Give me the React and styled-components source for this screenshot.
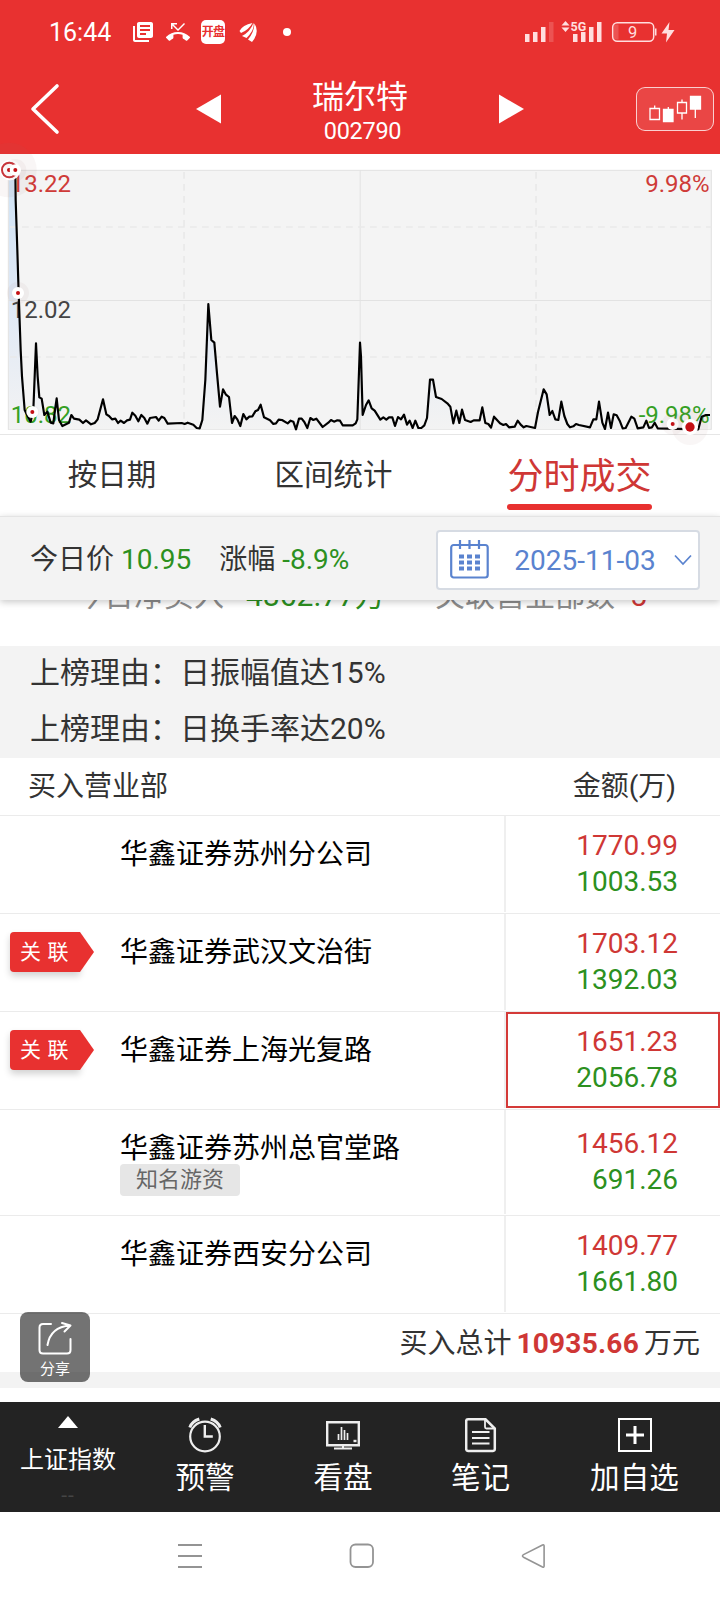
import React from "react";
import styled, { createGlobalStyle } from "styled-components";
import { MdLibraryBooks, MdPhoneMissed } from "react-icons/md";

const RED = "#e83130";
const UP = "#cf3735";
const DOWN = "#2c9020";

const Global = createGlobalStyle`
  * { box-sizing: border-box; }
  body { margin: 0; background: #fff; }
`;

const Screen = styled.div`
  position: relative;
  width: 720px;
  height: 1600px;
  overflow: hidden;
  display: flex;
  flex-direction: column;
  background: #fff;
  color: #333;
  font-family: Roboto, "Noto Sans CJK SC", sans-serif;
  font-weight: 400;
  white-space: nowrap;
`;

/* ---------- status bar ---------- */
const StatusBar = styled.div`
  height: 64px;
  flex: none;
  display: flex;
  align-items: center;
  background: ${RED};
  color: #fff;
  padding: 0 44px 0 49px;
  svg { display: block; flex: none; }
`;
const Clock = styled.span`
  font-size: 25px;
  line-height: 30px;
  width: 82px;
  padding-top: 1px;
`;
const StatusIcons = styled.div`
  display: flex;
  align-items: center;
  gap: 11px;
`;
const AppBadge = styled.span`
  width: 24px;
  height: 24px;
  border-radius: 5px;
  background: #fff;
  color: ${RED};
  display: flex;
  justify-content: center;
  font-size: 12px;
  letter-spacing: -0.8px;
  font-weight: 700;
  line-height: 24px;
`;
const StatusDot = styled.span`
  width: 8px;
  height: 8px;
  border-radius: 50%;
  background: #fff;
  margin-left: 12px;
`;
const StatusRight = styled.div`
  margin-left: auto;
  display: flex;
  align-items: center;
`;

/* ---------- title bar ---------- */
const TitleBar = styled.header`
  height: 90px;
  flex: none;
  display: grid;
  grid-template-columns: 1fr 328px 1fr;
  align-items: center;
  background: ${RED};
  color: #fff;
  svg { display: block; }
`;
const BackCell = styled.div`
  padding-left: 30px;
`;
const Switcher = styled.div`
  display: flex;
  align-items: center;
  justify-content: space-between;
`;
const StockTitle = styled.div`
  display: flex;
  flex-direction: column;
  align-items: center;
  padding-top: 8px;
`;
const StockName = styled.div`
  font-size: 32px;
  line-height: 35px;
`;
const StockCode = styled.div`
  font-size: 23.5px;
  letter-spacing: -0.3px;
  line-height: 29px;
  margin-top: 2px;
  padding-left: 5px;
`;
const KlineButton = styled.div`
  justify-self: end;
  width: 78px;
  height: 44px;
  margin-right: 6px;
  border: 1px solid rgba(255, 255, 255, 0.75);
  border-radius: 9px;
  background: rgba(255, 255, 255, 0.1);
  display: flex;
  align-items: center;
  justify-content: center;
`;

/* ---------- chart ---------- */
const ChartPanel = styled.div`
  height: 281px;
  flex: none;
  border-bottom: 1px solid #e6e6e6;
  svg { display: block; overflow: visible; }
`;

/* ---------- tabs ---------- */
const Tabs = styled.nav`
  height: 81px;
  flex: none;
  display: grid;
  grid-template-columns: 224px 219px 273px;
  justify-items: center;
`;
const Tab = styled.div`
  height: 75px;
  line-height: ${(p) => (p.$active ? 84 : 81)}px;
  font-size: ${(p) => (p.$active ? 36 : 29.5)}px;
  color: ${(p) => (p.$active ? UP : "#333")};
  position: relative;
  &::after {
    content: "";
    display: ${(p) => (p.$active ? "block" : "none")};
    position: absolute;
    left: 0;
    right: 0;
    bottom: 0;
    height: 6px;
    border-radius: 3px;
    background: ${RED};
  }
`;

/* ---------- price / date bar ---------- */
const PriceBar = styled.div`
  height: 84px;
  flex: none;
  position: relative;
  z-index: 1;
  display: flex;
  align-items: center;
  padding: 2px 20px 0 30px;
  background: #f3f3f3;
  border-top: 1px solid #e4e4e4;
  box-shadow: 0 2px 7px rgba(0, 0, 0, 0.22);
  font-size: 28px;
  line-height: 40px;
`;
const Quote = styled.span`
  margin-right: 28px;
  color: #333;
`;
const Value = styled.span`
  color: ${(p) => (p.$up ? UP : DOWN)};
`;
const DatePicker = styled.div`
  margin-left: auto;
  width: 264px;
  height: 60px;
  border: 2px solid #d6dbe3;
  border-radius: 4px;
  background: #fff;
  color: #5a83cf;
  display: flex;
  align-items: center;
  justify-content: space-between;
  padding: 0 6px 0 12px;
  svg { display: block; }
`;
const DateText = styled.span`
  padding: 2px 0 0 7px;
`;

/* ---------- scrolled summary ---------- */
const Summary = styled.div`
  height: 46px;
  flex: none;
  display: flex;
  padding-left: 74px;
  font-size: 30px;
  line-height: 40px;
  color: #8c8c8c;
`;
const SummaryItem = styled.div`
  flex: none;
  width: ${(p) => p.$width}px;
  display: flex;
  gap: ${(p) => p.$gap}px;
  margin-top: -24px;
`;

/* ---------- reasons ---------- */
const Reasons = styled.div`
  flex: none;
  background: #f3f3f3;
`;
const Reason = styled.div`
  height: 56px;
  padding-left: 30px;
  font-size: 30px;
  line-height: 54px;
`;

/* ---------- table ---------- */
const TableHead = styled.div`
  height: 58px;
  flex: none;
  display: flex;
  justify-content: space-between;
  padding: 0 44px 0 28px;
  border-bottom: 1px solid #ebebeb;
  font-size: 28px;
  line-height: 57px;
`;
const Row = styled.div`
  height: ${(p) => (p.$tagged ? 106 : 98)}px;
  flex: none;
  display: grid;
  grid-template-columns: 120px 386px 214px;
  border-bottom: 1px solid #ebebeb;
  padding-bottom: 1px;
`;
const Relation = styled.div`
  padding: 18px 0 0 10px;
`;
const RelationFlag = styled.div`
  position: relative;
  width: 70px;
  height: 40px;
  border-radius: 4px 0 0 4px;
  background: ${RED};
  color: #fff;
  font-size: 21px;
  line-height: 40px;
  letter-spacing: 6.5px;
  padding-left: 10px;
  box-shadow: 0 4px 7px rgba(0, 0, 0, 0.18);
  &::after {
    content: "";
    position: absolute;
    left: 70px;
    top: 0;
    border: solid transparent;
    border-width: 20px 0 20px 14px;
    border-left-color: ${RED};
  }
`;
const Branch = styled.div`
  padding-top: 22px;
  border-right: 2px solid #efefef;
  color: #000;
  font-size: 28px;
`;
const BranchName = styled.div`
  height: 32px;
  line-height: 34px;
`;
const BranchTag = styled.div`
  width: 120px;
  height: 32px;
  border-radius: 4px;
  background: #e6e6e6;
  color: #666;
  font-size: 22px;
  line-height: 32px;
  text-align: center;
`;
const Amounts = styled.div`
  display: flex;
  flex-direction: column;
  justify-content: center;
  align-items: flex-end;
  padding-right: ${(p) => (p.$selected ? 40 : 42)}px;
  border: ${(p) => (p.$selected ? "2px solid #d43a38" : "none")};
  font-size: 28px;
  line-height: 36px;
`;
const Total = styled.div`
  height: 58px;
  flex: none;
  display: flex;
  justify-content: flex-end;
  gap: 5px;
  padding-right: 20px;
  font-size: 28px;
  line-height: 60px;
`;
const TotalValue = styled.b`
  color: ${UP};
  font-weight: 700;
  letter-spacing: 0.25px;
`;
const Separator = styled.div`
  height: 16px;
  flex: none;
  margin-bottom: 14px;
  background: #f3f3f3;
`;

/* ---------- floating share ---------- */
const Share = styled.div`
  position: absolute;
  left: 20px;
  top: 1312px;
  width: 70px;
  height: 70px;
  border-radius: 8px;
  background: rgba(0, 0, 0, 0.55);
  color: #fff;
  display: flex;
  flex-direction: column;
  align-items: center;
  padding-top: 9px;
  font-size: 15px;
  line-height: 20px;
  svg { display: block; margin-bottom: 4px; }
`;

/* ---------- bottom bars ---------- */
const ActionBar = styled.div`
  height: 110px;
  flex: none;
  display: grid;
  grid-template-columns: 136px 138px 138px 137px 171px;
  background: #232323;
  color: #fff;
`;
const Action = styled.div`
  display: flex;
  flex-direction: column;
  align-items: center;
  padding-top: 15px;
  font-size: 29.6px;
  line-height: 36px;
  svg { display: block; margin-bottom: 7px; }
`;
const IndexAction = styled(Action)`
  padding-top: 14px;
  font-size: 24px;
  line-height: 30px;
  svg { margin-bottom: 17px; }
`;
const IndexValue = styled.span`
  color: #454545;
  font-size: 21px;
  letter-spacing: 1px;
  line-height: 30px;
  margin-top: 5px;
`;
const SystemNav = styled.div`
  height: 88px;
  flex: none;
  display: flex;
  align-items: center;
  justify-content: space-between;
  padding: 0 174px 0 177px;
`;

const linePoints = `46,60 47,150 52,300 56,430 62,600 66,680 74,780 84,800 92,815 100,780 108,580 113,680
118,742 125,746 133,795 142,785 152,818 160,820 165,780 170,745 177,810 187,828 207,818 214,795 222,806 238,809
249,819 258,811 273,823 284,819 293,808 309,748 319,793 327,798 336,808 346,806 354,819 362,812 372,819
381,811 390,809 397,788 406,797 415,814 424,795 433,804 442,821 450,804 468,801 476,812 485,800 493,804
503,821 545,819 554,822 563,818 580,824 590,834 599,835 607,810 616,690 625,462 634,570 643,578 651,670
660,770 669,718 678,734 687,741 696,819 704,798 712,808 721,828 730,792 739,808 748,800 757,799 766,784
774,780 782,764 792,802 810,811 820,822 828,820 836,809 846,810 863,820 872,812 880,815 888,838 897,806
905,806 913,816 922,834 931,804 940,810 949,806 968,831 985,818 993,810 1002,815 1012,811 1020,812
1028,826 1058,826 1067,820 1072,808 1080,578 1083,620 1088,795 1098,765 1106,751 1115,775 1124,782
1141,809 1150,802 1159,809 1167,802 1177,802 1185,828 1194,801 1203,808 1212,794 1221,824 1229,812
1238,834 1246,812 1255,834 1264,834 1273,826 1281,804 1290,689 1299,689 1308,741 1325,747 1342,760
1351,770 1360,820 1369,782 1378,819 1386,779 1395,810 1412,816 1421,811 1439,811 1447,772 1456,819
1465,822 1473,833 1482,800 1500,820 1510,825 1518,822 1527,832 1544,830 1553,812 1562,824 1571,832
1579,828 1605,834 1614,786 1631,718 1640,733 1649,795 1657,783 1666,808 1675,810 1684,755 1693,798
1702,822 1710,832 1720,829 1728,822 1737,825 1770,832 1780,808 1789,808 1797,755 1807,818 1815,837
1824,788 1833,834 1841,793 1850,796 1859,812 1868,835 1877,834 1894,800 1903,806 1913,835 1930,832
1939,812 1947,834 1956,832 1964,818 1973,835 2095,838 2105,800 2118,795 2130,795`;

function Marker({ x, y, glow = 33, halo = 18, dot = 6 }) {
  return (
    <g>
      <circle cx={x} cy={y} r={glow} fill="rgba(150,110,110,0.06)" />
      <circle cx={x} cy={y} r={halo} fill="#fff" />
      <circle cx={x} cy={y} r={dot} fill="#c40f14" />
    </g>
  );
}

function Chart() {
  return (
    <svg width="720" height="281" viewBox="0 12 2160 843" fontFamily="Roboto" fontSize="72">
      <defs>
        <linearGradient id="area" x1="0" y1="0" x2="0" y2="1">
          <stop offset="0" stopColor="#cfe3f5" />
          <stop offset="0.5" stopColor="#dfe8f5" />
          <stop offset="1" stopColor="#f3f3f3" />
        </linearGradient>
      </defs>
      <rect x="25" y="61" width="2109" height="777" fill="#f4f4f4" stroke="#e2e2e2" strokeWidth="3" />
      <polygon points={`27,62 ${linePoints} 2130,838 27,838`} fill="url(#area)" />
      <g stroke="#e2e2e2" strokeWidth="3" fill="none">
        <path d="M25 451.500H2134M1080.500 61V838" />
        <path d="M30 231H2134M30 621H2134M552 66V838M1608 66V838" stroke="#e9e9e9" strokeWidth="5" strokeDasharray="20 16" />
      </g>
      <text x="32" y="127" fill="#cf3b38">13.22</text>
      <text x="32" y="504" fill="#444">12.02</text>
      <text x="32" y="819" fill="#35a024">10.82</text>
      <text x="2129" y="126" fill="#cf3b38" textAnchor="end">9.98%</text>
      <text x="2129" y="819" fill="#35a024" textAnchor="end">-9.98%</text>
      <polyline points={linePoints} fill="none" stroke="#000" strokeWidth="6.500" strokeLinejoin="round" />
      <circle cx="28" cy="60" r="82" fill="rgba(150,110,110,0.06)" />
      <circle cx="30" cy="60" r="31" fill="#fff" />
      <circle cx="28" cy="60" r="22" fill="none" stroke="#c8353a" strokeWidth="6" />
      <circle cx="27" cy="60" r="6" fill="#c40f14" />
      <Marker x={46} y={60} glow={33} halo={17} />
      <Marker x={54} y={429} />
      <Marker x={97} y={786} glow={20} />
      <Marker x={2018} y={822} />
      <Marker x={2070} y={831} glow={54} halo={24} dot={14} />
    </svg>
  );
}

function SignalIcons() {
  return (
    <svg width="151" height="24" viewBox="525 20 151 24" fill="#ffdede">
      <path d="M525 34h4.500v8H525zM533 32h4.500v10H533zM541 27h4.500v15H541z" />
      <path d="M549 22h4.500v20H549z" opacity="0.2" />
      <path d="M573 34h4.500v8H573zM581 32h4.500v10H581zM589 27h4.500v15H589zM597 22h4.500v20H597z" />
      <path d="M561.500 25.500l4-4.500 4 4.500zM561.500 27.500l4 4.500 4-4.500z" />
      <text x="570.500" y="31" fontFamily="Roboto" fontSize="12.500" fontWeight="700">5G</text>
      <rect x="612.700" y="22.700" width="41" height="18.600" rx="4.500" fill="none" stroke="#ffdede" strokeWidth="1.500" />
      <path d="M614 24.500h4.500v15H614z" opacity="0.2" />
      <path d="M655 28.500h1.500v7H655z" />
      <text x="628" y="38" fontFamily="Roboto" fontSize="16.500">9</text>
      <path d="M669.500 22l-8 11.500h5.500l-1 9 8.500-12.500h-6z" />
    </svg>
  );
}

const rows = [
  { name: "华鑫证券苏州分公司", buy: "1770.99", sell: "1003.53" },
  { name: "华鑫证券武汉文治街", buy: "1703.12", sell: "1392.03", related: true },
  { name: "华鑫证券上海光复路", buy: "1651.23", sell: "2056.78", related: true, selected: true },
  { name: "华鑫证券苏州总官堂路", buy: "1456.12", sell: "691.26", tag: "知名游资" },
  { name: "华鑫证券西安分公司", buy: "1409.77", sell: "1661.80" },
];

export default function App() {
  return (
    <>
      <Global />
      <Screen>
        <StatusBar>
          <Clock>16:44</Clock>
          <StatusIcons>
            <MdLibraryBooks size={24} />
            <MdPhoneMissed size={24} />
            <AppBadge>开盘</AppBadge>
            <svg width="24" height="24" viewBox="235 20 24 24" fill="#fff">
              <path d="M238.500 31q3-6 13-8-4 7-11.500 10zM241 36q8-4 11.500-13 1.500 7-7 15zM247 39.500q6-7 6.500-16 5.500 9-2.500 18.500z" />
            </svg>
            <StatusDot />
          </StatusIcons>
          <StatusRight>
            <SignalIcons />
          </StatusRight>
        </StatusBar>

        <TitleBar>
          <BackCell>
            <svg width="32" height="52" viewBox="30 83 32 52" fill="none" stroke="#fff" strokeWidth="3.600" strokeLinecap="round" strokeLinejoin="round">
              <path d="M57 86L33 109l24 23" />
            </svg>
          </BackCell>
          <Switcher>
            <svg width="25" height="30" viewBox="0 0 25 30" fill="#fff"><path d="M0 15L25 .5v29z" /></svg>
            <StockTitle>
              <StockName>瑞尔特</StockName>
              <StockCode>002790</StockCode>
            </StockTitle>
            <svg width="25" height="30" viewBox="0 0 25 30" fill="#fff"><path d="M25 15L0 .5v29z" /></svg>
          </Switcher>
          <KlineButton>
            <svg width="54" height="28" viewBox="648 95 54 28" fill="none" stroke="#fff" strokeWidth="1.300">
              <path d="M650 108.500h9.500v11H650zM654.700 105.500v3M677.500 102.500h9v10.500h-9zM682 99.500v3M682 113v6.500M668.300 107v4M695.300 109v9" />
              <path d="M663.500 109.500h9.500v12h-9.500zM690.500 96.500h10v12.500h-10z" fill="#fff" />
            </svg>
          </KlineButton>
        </TitleBar>

        <ChartPanel><Chart /></ChartPanel>

        <Tabs>
          <Tab>按日期</Tab>
          <Tab>区间统计</Tab>
          <Tab $active>分时成交</Tab>
        </Tabs>

        <PriceBar>
          <Quote>今日价 <Value>10.95</Value></Quote>
          <Quote>涨幅 <Value>-8.9%</Value></Quote>
          <DatePicker>
            <svg width="39" height="39" viewBox="0 0 39 39" fill="none" stroke="#5a83cf" strokeWidth="2.200">
              <rect x="1.200" y="5" width="36.500" height="32.500" rx="2.500" />
              <path d="M10 0v9M19.500 0v9M29 0v9" />
              <path d="M9 16.500h21M9 22.500h21M9 28.500h21" strokeWidth="3.800" strokeDasharray="5 3" />
            </svg>
            <DateText>2025-11-03</DateText>
            <svg width="18" height="12" viewBox="0 0 18 12" fill="none" stroke="#5a83cf" strokeWidth="1.700"><path d="M1 1.500l8 8.500 8-8.500" /></svg>
          </DatePicker>
        </PriceBar>

        <Summary>
          <SummaryItem $width={361} $gap={22}>今日净买入 <Value>4862.77万</Value></SummaryItem>
          <SummaryItem $width={220} $gap={15}>关联营业部数 <Value $up>5</Value></SummaryItem>
        </Summary>

        <Reasons>
          <Reason>上榜理由：日振幅值达15%</Reason>
          <Reason>上榜理由：日换手率达20%</Reason>
        </Reasons>

        <TableHead>
          <span>买入营业部</span>
          <span>金额(万)</span>
        </TableHead>
        {rows.map((r) => (
          <Row key={r.name} $tagged={!!r.tag}>
            <Relation>{r.related && <RelationFlag>关联</RelationFlag>}</Relation>
            <Branch>
              <BranchName>{r.name}</BranchName>
              {r.tag && <BranchTag>{r.tag}</BranchTag>}
            </Branch>
            <Amounts $selected={r.selected}>
              <Value $up>{r.buy}</Value>
              <Value>{r.sell}</Value>
            </Amounts>
          </Row>
        ))}
        <Total>
          <span>买入总计</span>
          <TotalValue>10935.66</TotalValue>
          <span>万元</span>
        </Total>
        <Separator />

        <ActionBar>
          <IndexAction>
            <svg width="20" height="12" viewBox="0 0 20 12" fill="#fff"><path d="M10 0l10 12H0z" /></svg>
            上证指数
            <IndexValue>--</IndexValue>
          </IndexAction>
          <Action>
            <svg width="34" height="36" viewBox="188 1417 34 36" fill="none" stroke="#eee" strokeWidth="2.200">
              <circle cx="205" cy="1436.500" r="14.800" />
              <path d="M189.800 1427.500q2-6 9.500-8.500M220.200 1427.500q-2-6-9.500-8.500" strokeWidth="3" />
              <path d="M204.800 1425v11.500h8" strokeWidth="2.400" />
            </svg>
            预警
          </Action>
          <Action>
            <svg width="34" height="36" viewBox="326 1417 34 36" fill="none" stroke="#eee" strokeWidth="2.400">
              <path d="M327.200 1422.200h31.600v23h-31.600z" />
              <path d="M334 1448.500h18M343 1445v3" strokeWidth="2" />
              <path d="M338.500 1440v-6M341.500 1440v-13M344.500 1440v-10M347.500 1440v-7" strokeWidth="1.700" />
              <path d="M353.500 1441h3" />
            </svg>
            看盘
          </Action>
          <Action>
            <svg width="32" height="36" viewBox="465 1417 32 36" fill="none" stroke="#eee" strokeWidth="2.500">
              <path d="M468 1419.300h17.500l9.300 9.300v20.500q0 1.800-1.800 1.800h-25q-1.800 0-1.800-1.800v-28q0-1.800 1.800-1.800z" />
              <path d="M485 1419v8q0 1.500 1.500 1.500h8.500" strokeWidth="1.800" />
              <path d="M472 1432h17.500M472 1438h17.500M472 1443.500h17.500" strokeWidth="1.800" />
            </svg>
            笔记
          </Action>
          <Action>
            <svg width="34" height="36" viewBox="0 0 34 36" fill="none" stroke="#fff" strokeWidth="2">
              <rect x="1" y="2" width="32" height="32" />
              <path d="M17 9v18M8 18h18" strokeWidth="3" />
            </svg>
            加自选
          </Action>
        </ActionBar>

        <SystemNav>
          <svg width="26" height="26" viewBox="0 0 26 26" stroke="#949494" strokeWidth="2"><path d="M1 2h24M1 13h24M1 24h24" /></svg>
          <svg width="26" height="26" viewBox="0 0 26 26" fill="none" stroke="#949494" strokeWidth="1.800"><rect x="1.500" y="1.500" width="22.500" height="22.500" rx="5" /></svg>
          <svg width="26" height="26" viewBox="0 0 26 26" fill="none" stroke="#949494" strokeWidth="1.600" strokeLinejoin="round"><path d="M3.500 11.600L22.500 2q1.600-.6 1.600 1v20q0 1.600-1.600 1L3.500 14.200q-2-1.300 0-2.600z" /></svg>
        </SystemNav>

        <Share>
          <svg width="34" height="34" viewBox="38 1321 34 34" fill="none" stroke="#fff" strokeWidth="2" strokeLinecap="round" strokeLinejoin="round">
            <path d="M51 1324h-8q-3.500 0-3.500 3.500v22.500q0 3.500 3.500 3.500h24q3.500 0 3.500-3.500v-11M47.500 1345q3-18 22.500-19.500M62 1323l8.500 2.500-6 6" />
          </svg>
          分享
        </Share>
      </Screen>
    </>
  );
}
